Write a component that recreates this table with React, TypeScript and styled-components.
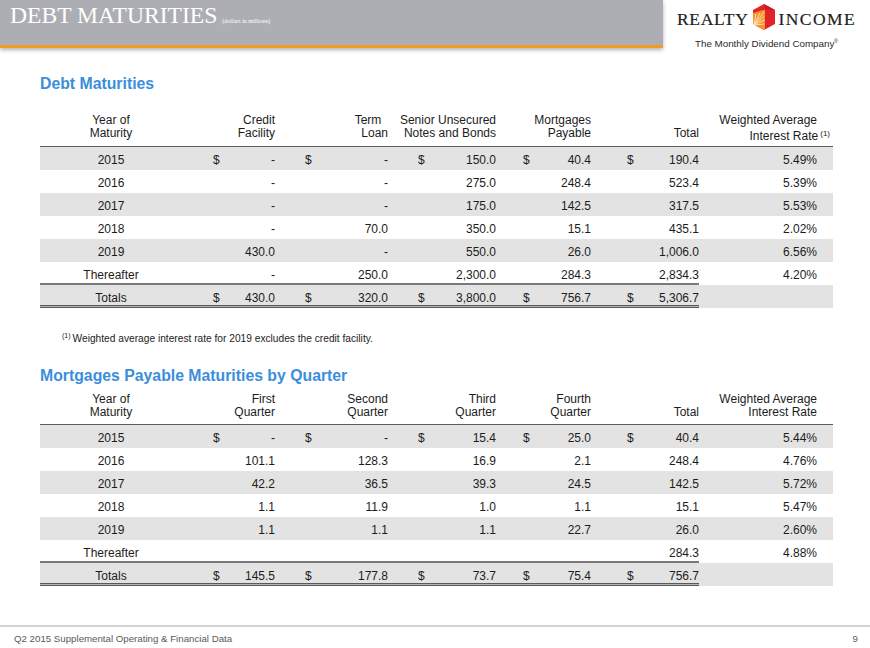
import React from "react";
import styled, { createGlobalStyle } from "styled-components";

const GlobalStyle = createGlobalStyle`
  html, body {
    margin: 0;
    padding: 0;
    background: #ffffff;
  }
  body {
    font-family: "Liberation Sans", Arial, sans-serif;
    color: #1c1c1c;
  }
`;

const Page = styled.div`
  width: 870px;
  height: 648px;
  display: flex;
  flex-direction: column;
  overflow: hidden;
`;

const Header = styled.header`
  display: flex;
  height: 44px;
`;

const Band = styled.div`
  width: 653px;
  height: 41px;
  background: #adaeb3;
  border-bottom: 3px solid #f29a21;
  box-shadow: 0 2px 4px rgba(0, 0, 0, 0.3);
  padding: 4px 0 0 10px;
  box-sizing: content-box;
  display: flex;
  align-items: baseline;
  position: relative;
  z-index: 1;
`;

const PageTitle = styled.h1`
  margin: 0;
  font-family: "Liberation Serif", "Times New Roman", serif;
  font-weight: normal;
  font-size: 23.6px;
  line-height: 23px;
  color: #ffffff;
`;

const TitleNote = styled.span`
  font-family: "Liberation Serif", "Times New Roman", serif;
  font-size: 6px;
  color: #ffffff;
  margin-left: 5px;
`;

const LogoBox = styled.div`
  flex: 1;
  display: flex;
  flex-direction: column;
  align-items: center;
  padding-top: 5px;
`;

const LogoRow = styled.div`
  display: flex;
  align-items: flex-end;
  gap: 3px;
  height: 25px;
`;

const LogoWord = styled.span<{ $spacing: number }>`
  font-family: "Liberation Serif", "Times New Roman", serif;
  font-size: 17.5px;
  line-height: 18px;
  letter-spacing: ${(p) => p.$spacing}px;
  color: #1e1e1e;
  -webkit-text-stroke: 0.2px #1e1e1e;
  padding-bottom: 2px;
`;

const Tagline = styled.div`
  margin-top: 6px;
  font-size: 9.8px;
  color: #2a2a2a;
  line-height: 11px;

  sup {
    font-size: 5px;
    vertical-align: 4px;
  }
`;

const Content = styled.main`
  padding: 0 37px 0 40px;
  display: flex;
  flex-direction: column;
`;

const SectionTitle = styled.h2<{ $top: number }>`
  margin: ${(p) => p.$top}px 0 0;
  font-size: 15.8px;
  line-height: 18px;
  font-weight: bold;
  color: #3a8edb;
`;

const Table = styled.div<{ $top: number }>`
  margin-top: ${(p) => p.$top}px;
  width: 793px;
  font-size: 12px;
`;

const GRID = "142px 93px 113px 108px 95px 108px 118px 16px";

const HeadRow = styled.div<{ $bottom: number }>`
  display: grid;
  grid-template-columns: ${GRID};
  line-height: 13px;
  padding-bottom: ${(p) => p.$bottom}px;
  border-bottom: 1px solid #5c5c5c;
`;

const HeadCell = styled.div<{ $center?: boolean }>`
  text-align: ${(p) => (p.$center ? "center" : "right")};
  white-space: pre;
  color: #1c1c1c;

  sup {
    font-size: 8px;
    vertical-align: 4px;
    margin-right: -13px;
    margin-left: 2px;
  }
`;

const Row = styled.div<{ $shade: boolean }>`
  display: grid;
  grid-template-columns: ${GRID};
  height: 23px;
  background: ${(p) => (p.$shade ? "#e3e3e3" : "transparent")};
`;

type Rule = "none" | "single" | "double";

const ruleShadow = (r: Rule) =>
  r === "single"
    ? "inset 0 -2px 0 #7a7a7a"
    : r === "double"
    ? "inset 0 -1px 0 #5a5a5a, inset 0 -2px 0 #b5b5b5, inset 0 -3px 0 #5a5a5a"
    : "none";

const Cell = styled.div<{ $rule: Rule }>`
  display: flex;
  align-items: center;
  padding-top: 3px;
  box-sizing: border-box;
  box-shadow: ${(p) => ruleShadow(p.$rule)};
`;

const YearCell = styled(Cell)`
  justify-content: center;
`;

const MoneyCell = styled(Cell)<{ $pad: number }>`
  justify-content: space-between;
  padding-left: ${(p) => p.$pad}px;
`;

const RateCell = styled(Cell)`
  justify-content: flex-end;
`;

const Footnote = styled.p`
  margin: 21px 0 0 22px;
  font-size: 10.2px;
  line-height: 14px;

  sup {
    font-size: 7px;
    vertical-align: 4px;
    margin-right: 2px;
  }
`;

const Footer = styled.footer`
  margin-top: auto;
  border-top: 2px solid #d4d4d4;
  height: 19px;
  display: flex;
  justify-content: space-between;
  align-items: center;
  padding: 2px 12px 0 14px;
  font-size: 9.7px;
  color: #5a5a5a;
`;

type Money = { d?: boolean; v: string };
type DataRow = { year: string; cells: Money[]; rate: string };

const m = (v: string, d = false): Money => ({ v, d });

const dollarPads = [31, 30, 30, 27, 36];

const debtRows: DataRow[] = [
  { year: "2015", cells: [m("-", true), m("-", true), m("150.0", true), m("40.4", true), m("190.4", true)], rate: "5.49%" },
  { year: "2016", cells: [m("-"), m("-"), m("275.0"), m("248.4"), m("523.4")], rate: "5.39%" },
  { year: "2017", cells: [m("-"), m("-"), m("175.0"), m("142.5"), m("317.5")], rate: "5.53%" },
  { year: "2018", cells: [m("-"), m("70.0"), m("350.0"), m("15.1"), m("435.1")], rate: "2.02%" },
  { year: "2019", cells: [m("430.0"), m("-"), m("550.0"), m("26.0"), m("1,006.0")], rate: "6.56%" },
  { year: "Thereafter", cells: [m("-"), m("250.0"), m("2,300.0"), m("284.3"), m("2,834.3")], rate: "4.20%" },
  { year: "Totals", cells: [m("430.0", true), m("320.0", true), m("3,800.0", true), m("756.7", true), m("5,306.7", true)], rate: "" },
];

const mortgageRows: DataRow[] = [
  { year: "2015", cells: [m("-", true), m("-", true), m("15.4", true), m("25.0", true), m("40.4", true)], rate: "5.44%" },
  { year: "2016", cells: [m("101.1"), m("128.3"), m("16.9"), m("2.1"), m("248.4")], rate: "4.76%" },
  { year: "2017", cells: [m("42.2"), m("36.5"), m("39.3"), m("24.5"), m("142.5")], rate: "5.72%" },
  { year: "2018", cells: [m("1.1"), m("11.9"), m("1.0"), m("1.1"), m("15.1")], rate: "5.47%" },
  { year: "2019", cells: [m("1.1"), m("1.1"), m("1.1"), m("22.7"), m("26.0")], rate: "2.60%" },
  { year: "Thereafter", cells: [m(""), m(""), m(""), m(""), m("284.3")], rate: "4.88%" },
  { year: "Totals", cells: [m("145.5", true), m("177.8", true), m("73.7", true), m("75.4", true), m("756.7", true)], rate: "" },
];

function HouseIcon() {
  return (
    <svg width="24" height="26" viewBox="0 0 24 26">
      <polygon points="12,0 23,6 23,20 12,26 1,20 1,6" fill="#e3232a" />
      <polygon points="1,9 13,5.5 13,25.4 12,26 1,20" fill="#f4932a" />
      <g stroke="#ffe9c4" strokeWidth="0.9">
        <line x1="2" y1="21" x2="12" y2="8" />
        <line x1="2" y1="21" x2="12.5" y2="12" />
        <line x1="2" y1="21" x2="12.5" y2="16" />
        <line x1="2" y1="21" x2="12.5" y2="20" />
        <line x1="2" y1="21" x2="8" y2="9" />
        <line x1="2" y1="21" x2="4" y2="10" />
      </g>
      <polygon points="12,0 23,6 13,5.5" fill="#c81b22" />
    </svg>
  );
}

function DataTable({
  heads,
  rows,
  headBottom,
  top,
}: {
  heads: React.ReactNode[];
  rows: DataRow[];
  headBottom: number;
  top: number;
}) {
  return (
    <Table $top={top}>
      <HeadRow $bottom={headBottom}>
        {heads.map((h, i) => (
          <HeadCell key={i} $center={i === 0}>
            {h}
          </HeadCell>
        ))}
        <div />
      </HeadRow>
      {rows.map((r, i) => {
        const rule: Rule = i === rows.length - 2 ? "single" : i === rows.length - 1 ? "double" : "none";
        return (
          <Row key={r.year} $shade={i % 2 === 0}>
            <YearCell $rule={rule}>{r.year}</YearCell>
            {r.cells.map((c, j) => (
              <MoneyCell key={j} $rule={rule} $pad={dollarPads[j]}>
                <span>{c.d ? "$" : ""}</span>
                <span>{c.v}</span>
              </MoneyCell>
            ))}
            <RateCell $rule="none">{r.rate}</RateCell>
            <Cell $rule="none" />
          </Row>
        );
      })}
    </Table>
  );
}

export default function App() {
  return (
    <Page>
      <GlobalStyle />
      <Header>
        <Band>
          <PageTitle>DEBT MATURITIES</PageTitle>
          <TitleNote>(dollars in millions)</TitleNote>
        </Band>
        <LogoBox>
          <LogoRow>
            <LogoWord $spacing={0.7}>REALTY</LogoWord>
            <HouseIcon />
            <LogoWord $spacing={1.4}>INCOME</LogoWord>
          </LogoRow>
          <Tagline>
            The Monthly Dividend Company<sup>®</sup>
          </Tagline>
        </LogoBox>
      </Header>
      <Content>
        <SectionTitle $top={31}>Debt Maturities</SectionTitle>
        <DataTable
          top={21}
          headBottom={3}
          heads={[
            "Year of\nMaturity",
            "Credit\nFacility",
            "Term\u00a0\u00a0\nLoan",
            "Senior Unsecured\nNotes and Bonds",
            "Mortgages\nPayable",
            "\nTotal",
            <>
              {"Weighted Average\nInterest Rate"}
              <sup>(1)</sup>
            </>,
          ]}
          rows={debtRows}
        />
        <Footnote>
          <sup>(1)</sup>Weighted average interest rate for 2019 excludes the credit facility.
        </Footnote>
        <SectionTitle $top={21}>Mortgages Payable Maturities by Quarter</SectionTitle>
        <DataTable
          top={8}
          headBottom={5}
          heads={[
            "Year of\nMaturity",
            "First\nQuarter",
            "Second\nQuarter",
            "Third\nQuarter",
            "Fourth\nQuarter",
            "\nTotal",
            "Weighted Average\nInterest Rate",
          ]}
          rows={mortgageRows}
        />
      </Content>
      <Footer>
        <span>Q2 2015 Supplemental Operating &amp; Financial Data</span>
        <span>9</span>
      </Footer>
    </Page>
  );
}
